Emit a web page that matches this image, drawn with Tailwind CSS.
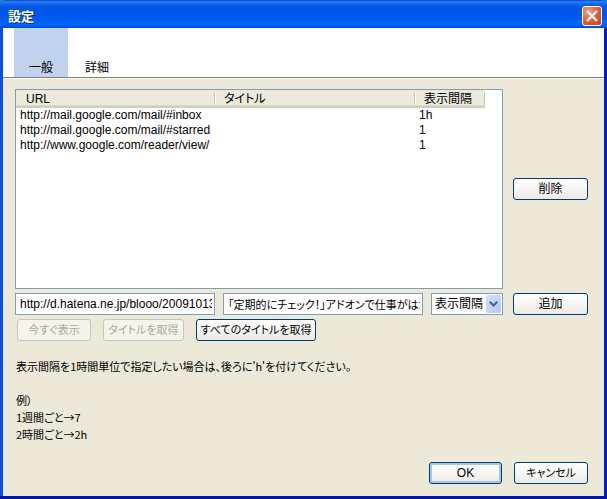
<!DOCTYPE html>
<html lang="ja">
<head>
  <meta charset="UTF-8" />
  <meta name="viewport" content="width=device-width, initial-scale=1.0" />
  <title>設定</title>
  <script src="https://cdn.jsdelivr.net/npm/@tailwindcss/browser@4"></script>
</head>
<body class="bg-[#1a7fd0] text-black text-[12px] leading-[17px] font-['Liberation_Sans','Noto_Sans_CJK_JP',sans-serif]">

  <!-- Window frame -->
  <div class="min-h-screen flex flex-col bg-[#0a48e0] border-b-3 border-[#0018a8] rounded-t-lg overflow-hidden">

    <!-- Title bar -->
    <header class="h-7 flex items-center justify-between pl-2 pt-1 pr-[5px] bg-[linear-gradient(to_bottom,#0040c0_0%,#2a80f8_6%,#0a5ce8_18%,#0054e3_35%,#0058ee_60%,#0066ff_85%,#0060fc_92%,#0042d0_100%)]">
      <h1 class="text-[13px] font-bold text-white [text-shadow:1px_1px_#0a2a80]">設定</h1>
      <button aria-label="閉じる" class="w-5 h-5 rounded-[3px] border border-white bg-[radial-gradient(circle_at_30%_25%,#f0a088,#e05a38_55%,#c83c18)] flex items-center justify-center">
        <svg class="w-3 h-3" viewBox="0 0 12 12" fill="none" stroke="#fff" stroke-width="2.2"><path d="M1 1L11 11M11 1L1 11" /></svg>
      </button>
    </header>

    <div class="flex-1 flex flex-col border-l-3 border-l-[#0a50e8] border-r-3 border-r-[#0020b8] bg-[#ece9d8]">

      <!-- Tabs -->
      <nav class="flex bg-white h-[50px] pl-[11px] border-b border-[#7f7f77]">
        <button class="w-[54px] bg-[#c1d2ee] flex items-end justify-center">一般</button>
        <button class="w-[58px] flex items-end justify-center">詳細</button>
      </nav>

      <main class="flex-1 flex flex-col border-t border-[#faf9f4] pt-[10px] pl-3 pr-4">

        <div class="grid grid-cols-[1fr_75px] gap-x-[10px] gap-y-1 items-center">
          <!-- URL list -->
          <div class="h-[200px] border border-[#7f9db9] bg-white">
            <table class="w-[469px] table-fixed border-collapse text-left leading-[15px]">
              <thead>
                <tr class="h-[18px] bg-[linear-gradient(to_bottom,#ebeadb_0,#ebeadb_15px,#dedac8_15px,#cbc7b8_18px)]">
                  <th class="w-[199px] p-0 font-normal"><div class="pl-[10px] h-3 leading-3 border-r border-[#c7c5b2]">URL</div></th>
                  <th class="w-[200px] p-0 font-normal"><div class="pl-2 h-3 leading-3 border-l border-l-white border-r border-r-[#c7c5b2] [font-feature-settings:'palt']">タイトル</div></th>
                  <th class="p-0 font-normal"><div class="pl-2 h-3 leading-3 border-l border-l-white border-r border-r-[#c7c5b2]">表示間隔</div></th>
                </tr>
              </thead>
              <tbody>
                <tr><td class="p-0 pl-1">http://mail.google.com/mail/#inbox</td><td></td><td class="p-0 pl-1">1h</td></tr>
                <tr><td class="p-0 pl-1">http://mail.google.com/mail/#starred</td><td></td><td class="p-0 pl-1">1</td></tr>
                <tr><td class="p-0 pl-1">http://www.google.com/reader/view/</td><td></td><td class="p-0 pl-1">1</td></tr>
              </tbody>
            </table>
          </div>
          <button class="h-[22px] leading-4 rounded-[3px] border border-[#003c74] bg-linear-to-b from-white to-[#ecebe5]">削除</button>

          <!-- New entry -->
          <div class="flex gap-2">
            <input type="text" aria-label="URL" value="http://d.hatena.ne.jp/blooo/20091013/1255400000" class="flex-1 min-w-0 h-[22px] pl-1 pr-[2px] bg-white border border-[#7f9db9]" />
            <input type="text" aria-label="タイトル" value="「定期的にチェック！」アドオンで仕事がはかどる" class="flex-1 min-w-0 h-[22px] pl-1 pr-[2px] bg-white border border-[#7f9db9] text-[11px] [font-feature-settings:'palt']" />
            <div class="relative w-[72px]">
              <select aria-label="表示間隔" class="appearance-none w-full h-[22px] pl-[3px] bg-white border border-[#7f9db9]">
                <option>表示間隔</option>
              </select>
              <span class="pointer-events-none absolute right-[2px] inset-y-[2px] w-[15px] rounded-[2px] bg-linear-to-br from-[#d3e0fd] to-[#b0c8f8] flex items-center justify-center">
                <svg class="w-[9px] h-[6px]" viewBox="0 0 9 6" fill="none" stroke="#4d6185" stroke-width="2"><path d="M0.7 0.7L4.5 4.5L8.3 0.7" /></svg>
              </span>
            </div>
          </div>
          <button class="h-[22px] leading-4 rounded-[3px] border border-[#003c74] bg-linear-to-b from-white to-[#ecebe5]">追加</button>
        </div>

        <!-- List actions -->
        <div class="flex gap-3 mt-1 pl-[2px] text-[11px] whitespace-nowrap [font-feature-settings:'palt']">
          <button disabled class="w-[74px] h-[22px] leading-4 rounded-[3px] border border-[#c9c7ba] bg-[#f5f4ea] text-[#aca899]">今すぐ表示</button>
          <button disabled class="w-[81px] h-[22px] leading-4 rounded-[3px] border border-[#c9c7ba] bg-[#f5f4ea] text-[#aca899]">タイトルを取得</button>
          <button class="w-[120px] h-[22px] leading-4 rounded-[3px] border border-[#003c74] bg-linear-to-b from-white to-[#ecebe5]">すべてのタイトルを取得</button>
        </div>

        <!-- Help -->
        <div class="mt-[17px] pl-px text-[11px] font-['Noto_Sans_CJK_JP',sans-serif] [font-feature-settings:'palt']">
          <p>表示間隔を1時間単位で指定したい場合は、後ろに'h'を付けてください。</p>
          <p class="mt-[17px]">例）</p>
          <p>1週間ごと→7</p>
          <p>2時間ごと→2h</p>
        </div>

        <footer class="mt-auto flex justify-end gap-3 pb-3 [font-feature-settings:'palt']">
          <button class="w-[73px] h-[22px] leading-4 rounded-[3px] border border-[#003c74] bg-linear-to-b from-white to-[#ecebe5] shadow-[inset_0_0_0_2px_#a6c3f2]">OK</button>
          <button class="w-[74px] h-[22px] leading-4 rounded-[3px] border border-[#003c74] bg-linear-to-b from-white to-[#ecebe5] text-[11px]">キャンセル</button>
        </footer>
      </main>
    </div>
  </div>
</body>
</html>
